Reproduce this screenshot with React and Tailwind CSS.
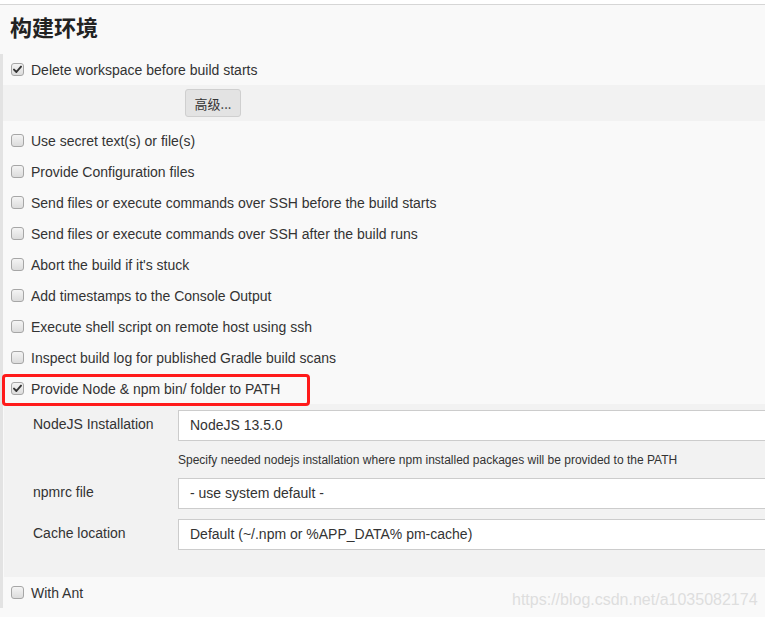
import React from "react";

function Box({ checked }) {
  return (
    <span className="relative inline-flex w-[13px] h-[13px] shrink-0 items-center justify-center rounded-[3px] border border-[#a6a6a6] bg-gradient-to-b from-[#f4f4f4] to-[#dcdcdc]">
      {checked && (
        <svg width="9" height="9" viewBox="0 0 9 9" className="block">
          <path d="M1 4.6 L3.4 7 L8 1.6" fill="none" stroke="#333" strokeWidth="1.9" strokeLinecap="round" strokeLinejoin="round" />
        </svg>
      )}
    </span>
  );
}

function Row({ label, checked, children }) {
  return (
    <div className="relative h-[31px] flex items-center pl-[8px] gap-[7px]">
      <Box checked={checked} />
      <span className="leading-none">{label}</span>
      {children}
    </div>
  );
}

function Field({ label, value, className = "" }) {
  return (
    <div className={"flex items-center " + className}>
      <div className="w-[174px] pl-[29px] shrink-0 -mt-[3px] whitespace-nowrap">{label}</div>
      <div className="flex-1 h-[31px] bg-white border border-[#cccccc] border-r-0 flex items-center pl-[11px]">{value}</div>
    </div>
  );
}

export default function App() {
  const rows = [
    "Use secret text(s) or file(s)",
    "Provide Configuration files",
    "Send files or execute commands over SSH before the build starts",
    "Send files or execute commands over SSH after the build runs",
    "Abort the build if it's stuck",
    "Add timestamps to the Console Output",
    "Execute shell script on remote host using ssh",
    "Inspect build log for published Gradle build scans",
  ];
  return (
    <div className="relative w-[765px] h-[617px] overflow-hidden bg-white text-[14px] text-[#333] font-['Liberation_Sans',Arial,sans-serif]">
      <div className="h-[4px] bg-white" />
      <div className="border-t border-[#d6d6d6] bg-[#f9f9f9]">
        <h2 className="h-[49px] pl-[10px] pt-[6px] text-[22px] font-bold leading-[30px] text-[#222] font-['Noto_Sans_CJK_SC',sans-serif]">构建环境</h2>
        <div className="border-l-[3px] border-[#e3e3e3]">
          <Row label="Delete workspace before build starts" checked />
          <div className="h-[36px] bg-[#f2f2f2] flex items-center pl-[182px]">
            <button className="w-[56px] h-[28px] rounded-[3px] border border-[#cfcfcf] bg-[#e3e3e3] text-[13px] text-[#333] font-['Noto_Sans_CJK_SC',sans-serif] leading-none">高级...</button>
          </div>
          <div className="pt-[4px]">
            {rows.map((r) => (
              <Row key={r} label={r} />
            ))}
            <Row label="Provide Node & npm bin/ folder to PATH" checked>
              <div className="absolute left-[-1px] top-[1px] w-[308px] h-[32px] rounded-[4px] border-[3px] border-[#ff1a1a]" />
            </Row>
            <div className="bg-[#f2f2f2] ml-[1px] pt-[6px] h-[173px]">
              <Field label="NodeJS Installation" value="NodeJS 13.5.0" />
              <div className="pl-[174px] h-[37px] flex items-center text-[12px] text-[#333]">
                Specify needed nodejs installation where npm installed packages will be provided to the PATH
              </div>
              <Field label="npmrc file" value="- use system default -" />
              <Field label="Cache location" value="Default (~/.npm or %APP_DATA% pm-cache)" className="mt-[10px]" />
            </div>
            <Row label="With Ant" />
          </div>
        </div>
        <div className="h-[9px] bg-[#f9f9f9]" />
      </div>
      <div className="absolute left-[512px] top-[588px] text-[16px] text-[#dedede]">https://blog.csdn.net/a1035082174</div>
    </div>
  );
}
